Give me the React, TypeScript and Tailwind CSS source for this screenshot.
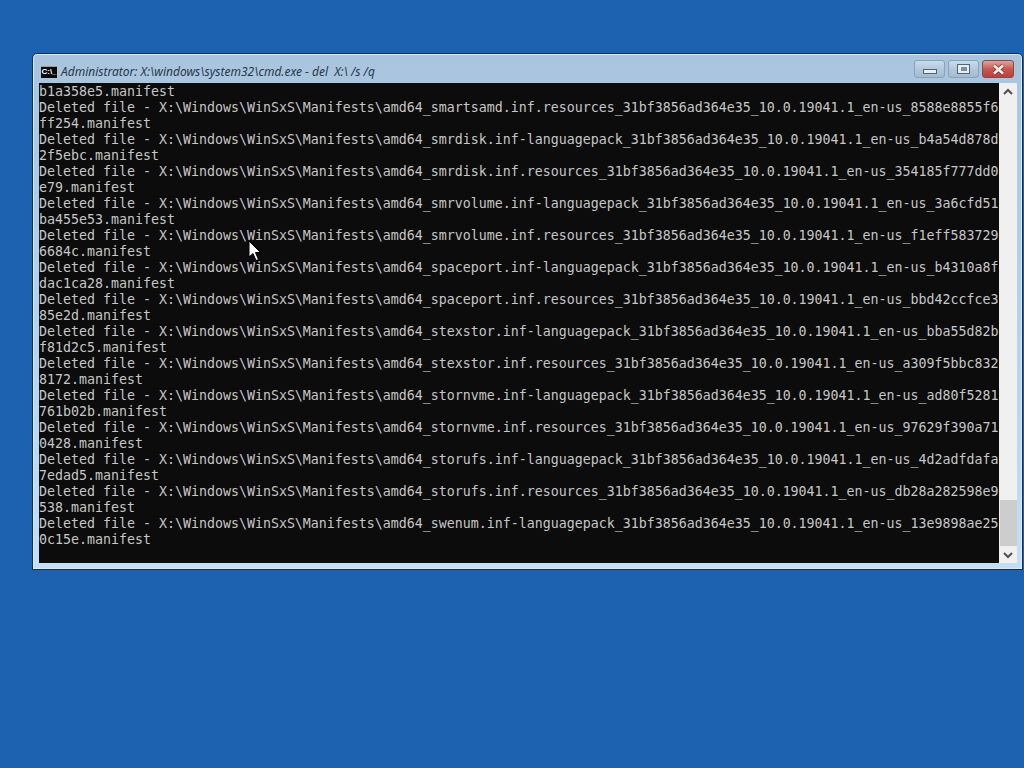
const lines = [
  "b1a358e5.manifest",
  "Deleted file - X:\\Windows\\WinSxS\\Manifests\\amd64_smartsamd.inf.resources_31bf3856ad364e35_10.0.19041.1_en-us_8588e8855f6",
  "ff254.manifest",
  "Deleted file - X:\\Windows\\WinSxS\\Manifests\\amd64_smrdisk.inf-languagepack_31bf3856ad364e35_10.0.19041.1_en-us_b4a54d878d",
  "2f5ebc.manifest",
  "Deleted file - X:\\Windows\\WinSxS\\Manifests\\amd64_smrdisk.inf.resources_31bf3856ad364e35_10.0.19041.1_en-us_354185f777dd0",
  "e79.manifest",
  "Deleted file - X:\\Windows\\WinSxS\\Manifests\\amd64_smrvolume.inf-languagepack_31bf3856ad364e35_10.0.19041.1_en-us_3a6cfd51",
  "ba455e53.manifest",
  "Deleted file - X:\\Windows\\WinSxS\\Manifests\\amd64_smrvolume.inf.resources_31bf3856ad364e35_10.0.19041.1_en-us_f1eff583729",
  "6684c.manifest",
  "Deleted file - X:\\Windows\\WinSxS\\Manifests\\amd64_spaceport.inf-languagepack_31bf3856ad364e35_10.0.19041.1_en-us_b4310a8f",
  "dac1ca28.manifest",
  "Deleted file - X:\\Windows\\WinSxS\\Manifests\\amd64_spaceport.inf.resources_31bf3856ad364e35_10.0.19041.1_en-us_bbd42ccfce3",
  "85e2d.manifest",
  "Deleted file - X:\\Windows\\WinSxS\\Manifests\\amd64_stexstor.inf-languagepack_31bf3856ad364e35_10.0.19041.1_en-us_bba55d82b",
  "f81d2c5.manifest",
  "Deleted file - X:\\Windows\\WinSxS\\Manifests\\amd64_stexstor.inf.resources_31bf3856ad364e35_10.0.19041.1_en-us_a309f5bbc832",
  "8172.manifest",
  "Deleted file - X:\\Windows\\WinSxS\\Manifests\\amd64_stornvme.inf-languagepack_31bf3856ad364e35_10.0.19041.1_en-us_ad80f5281",
  "761b02b.manifest",
  "Deleted file - X:\\Windows\\WinSxS\\Manifests\\amd64_stornvme.inf.resources_31bf3856ad364e35_10.0.19041.1_en-us_97629f390a71",
  "0428.manifest",
  "Deleted file - X:\\Windows\\WinSxS\\Manifests\\amd64_storufs.inf-languagepack_31bf3856ad364e35_10.0.19041.1_en-us_4d2adfdafa",
  "7edad5.manifest",
  "Deleted file - X:\\Windows\\WinSxS\\Manifests\\amd64_storufs.inf.resources_31bf3856ad364e35_10.0.19041.1_en-us_db28a282598e9",
  "538.manifest",
  "Deleted file - X:\\Windows\\WinSxS\\Manifests\\amd64_swenum.inf-languagepack_31bf3856ad364e35_10.0.19041.1_en-us_13e9898ae25",
  "0c15e.manifest",
];

function ConsoleIcon() {
  return (
    <div className="w-[16px] h-[12px] bg-[#0a0a0a] border-t border-[#9a9a9a] flex items-center justify-center">
      <span className="text-[8px] leading-[10px] text-white font-['Liberation_Sans',sans-serif] font-bold">C:\_</span>
    </div>
  );
}

function CaptionButtons() {
  return (
    <div className="flex gap-[3px] mt-[1px]">
      <div className="w-[31px] h-[18px] rounded-[3px] border border-[#8ba2b8] bg-gradient-to-b from-[#c9dcec] via-[#b3c8da] to-[#a4bbcf] flex items-center justify-center">
        <div className="w-[14px] h-[5px] mt-[4px] bg-[#e6edf3] border border-[#51657a]" />
      </div>
      <div className="w-[31px] h-[18px] rounded-[3px] border border-[#8ba2b8] bg-gradient-to-b from-[#c9dcec] via-[#b3c8da] to-[#a4bbcf] flex items-center justify-center">
        <div className="w-[13px] h-[10px] bg-[#e6edf3] border border-[#51657a] flex items-center justify-center">
          <div className="w-[6px] h-[4px] bg-[#7d8f9f]" />
        </div>
      </div>
      <div className="w-[32px] h-[18px] rounded-[3px] border border-[#8a4a4a] bg-gradient-to-b from-[#dfa59b] via-[#c9584f] to-[#b8423a] flex items-center justify-center">
        <svg width="15" height="11" viewBox="0 0 15 11">
          <path d="M3 1.5 L12 9.5 M12 1.5 L3 9.5" stroke="#6a3a3a" strokeWidth="4" />
          <path d="M3 1.5 L12 9.5 M12 1.5 L3 9.5" stroke="#f4eeea" strokeWidth="2.6" />
        </svg>
      </div>
    </div>
  );
}

function Scrollbar() {
  return (
    <div className="w-[18px] bg-[#f0f0f0] flex flex-col items-center">
      <svg width="18" height="17" viewBox="0 0 18 17" className="shrink-0">
        <path d="M5 11 L9 7 L13 11" fill="none" stroke="#505050" strokeWidth="2" />
      </svg>
      <div className="flex-1" />
      <div className="w-[17px] h-[46px] bg-[#cdcdcd] shrink-0" />
      <svg width="18" height="17" viewBox="0 0 18 17" className="shrink-0">
        <path d="M5 7 L9 11 L13 7" fill="none" stroke="#505050" strokeWidth="2" />
      </svg>
    </div>
  );
}

export default function App() {
  return (
    <div className="relative w-[1024px] h-[768px] overflow-hidden bg-[#1c62b0] pt-[53px] pl-[32px]">
      <div className="w-[991px] h-[517px] rounded-t-[5px] border border-[#16304c] bg-gradient-to-b from-[#a9c5de] to-[#c3def5] shadow-[inset_0_0_0_1px_#d9e9f6] flex flex-col">
        <div className="h-[29px] pl-[8px] pr-[8px] flex items-center justify-between shrink-0">
          <div className="flex items-center gap-[4px] pt-[6px]">
            <ConsoleIcon />
            <span className="text-[12px] italic text-[#26384c] font-['Noto_Sans',sans-serif] whitespace-pre">
              {"Administrator: X:\\windows\\system32\\cmd.exe - del  X:\\ /s /q"}
            </span>
          </div>
          <CaptionButtons />
        </div>
        <div className="flex ml-[6px] h-[480px] shrink-0">
          <div className="w-[960px] pt-[1px] bg-[#0c0c0c] text-[#c6c6c6] text-[13.29px] leading-[16px] font-['DejaVu_Sans_Mono',monospace] whitespace-pre overflow-hidden">
            {lines.map((line, i) => (
              <div key={i} className="h-[16px]">{line}</div>
            ))}
          </div>
          <Scrollbar />
        </div>
      </div>
      {/* mouse pointer */}
      <svg width="14" height="23" viewBox="0 0 14 23" className="absolute left-[248px] top-[240px]">
        <path d="M1 1 L1 17 L5 13.5 L8 20.5 L10.5 19.5 L7.5 12.5 L12.5 12.5 Z" fill="#fff" stroke="#000" strokeWidth="1" />
      </svg>
    </div>
  );
}
